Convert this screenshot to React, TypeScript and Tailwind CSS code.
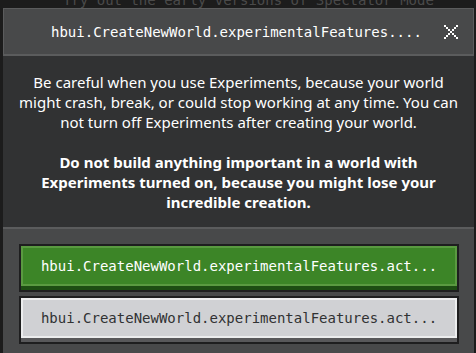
const pixelFont = "font-['DejaVu_Sans_Mono',monospace]";

function PixelClose() {
  const cells = [0, 1, 2, 3, 4, 5, 6];
  return (
    <svg width="14" height="14" viewBox="0 0 14 14" shapeRendering="crispEdges">
      {cells.map((i) => (
        <rect key={`a${i}`} x={i * 2} y={i * 2} width="2" height="2" fill="#ffffff" />
      ))}
      {cells.map((i) => (
        <rect key={`b${i}`} x={12 - i * 2} y={i * 2} width="2" height="2" fill="#ffffff" />
      ))}
    </svg>
  );
}

function FooterButton({ label, variant }: { label: string; variant: "green" | "gray" }) {
  const green = variant === "green";
  return (
    <div
      className={`h-[48px] border-2 border-[#1e1e1f] ${green ? "bg-[#1d4d13]" : "bg-[#58585a]"}`}
    >
      <div
        className={`mb-[4px] flex h-[40px] items-center justify-center border-2 ${
          green
            ? "border-[#5a9a41] bg-[#3c8527] text-white"
            : "border-[#ecedee] bg-[#d0d1d4] text-[#313233]"
        }`}
      >
        <span className={`${pixelFont} text-[14px] leading-none`}>{label}</span>
      </div>
    </div>
  );
}

export default function App() {
  return (
    <div className="flex h-[353px] w-[476px] flex-col overflow-hidden bg-[#1c1c1c]">
      <div className="h-[8px] overflow-hidden">
        <p className={`${pixelFont} -mt-[7px] pl-[63px] text-[14px] leading-[14px] text-[#4a4a4a]`}>
          Try out the early versions of Spectator Mode
        </p>
      </div>

      <div className="ml-[3px] flex w-[471px] flex-1 flex-col">
        <header className="flex h-[48px] items-center border border-b-2 border-[#5b5c5d] bg-[#48494a]">
          <h1
            className={`${pixelFont} flex-1 pl-[47px] text-[14px] leading-none text-white`}
          >
            hbui.CreateNewWorld.experimentalFeatures....
          </h1>
          <button className="mr-[15px] flex h-[14px] w-[14px] items-center justify-center">
            <PixelClose />
          </button>
        </header>

        <section className="flex h-[171px] flex-col gap-[20px] bg-[#313233] pt-[16px] text-center font-['Noto_Sans',sans-serif] text-[15px] leading-[20px] text-white">
          <p>
            Be careful when you use Experiments, because your world
            <br />
            might crash, break, or could stop working at any time. You can
            <br />
            not turn off Experiments after creating your world.
          </p>
          <p className="font-bold">
            Do not build anything important in a world with
            <br />
            Experiments turned on, because you might lose your
            <br />
            incredible creation.
          </p>
        </section>

        <footer className="flex flex-1 flex-col gap-[4px] border-t-2 border-[#5b5c5d] bg-[#48494a] pt-[15px] pl-[16px] pr-[15px]">
          <FooterButton label="hbui.CreateNewWorld.experimentalFeatures.act..." variant="green" />
          <FooterButton label="hbui.CreateNewWorld.experimentalFeatures.act..." variant="gray" />
        </footer>
      </div>
    </div>
  );
}
